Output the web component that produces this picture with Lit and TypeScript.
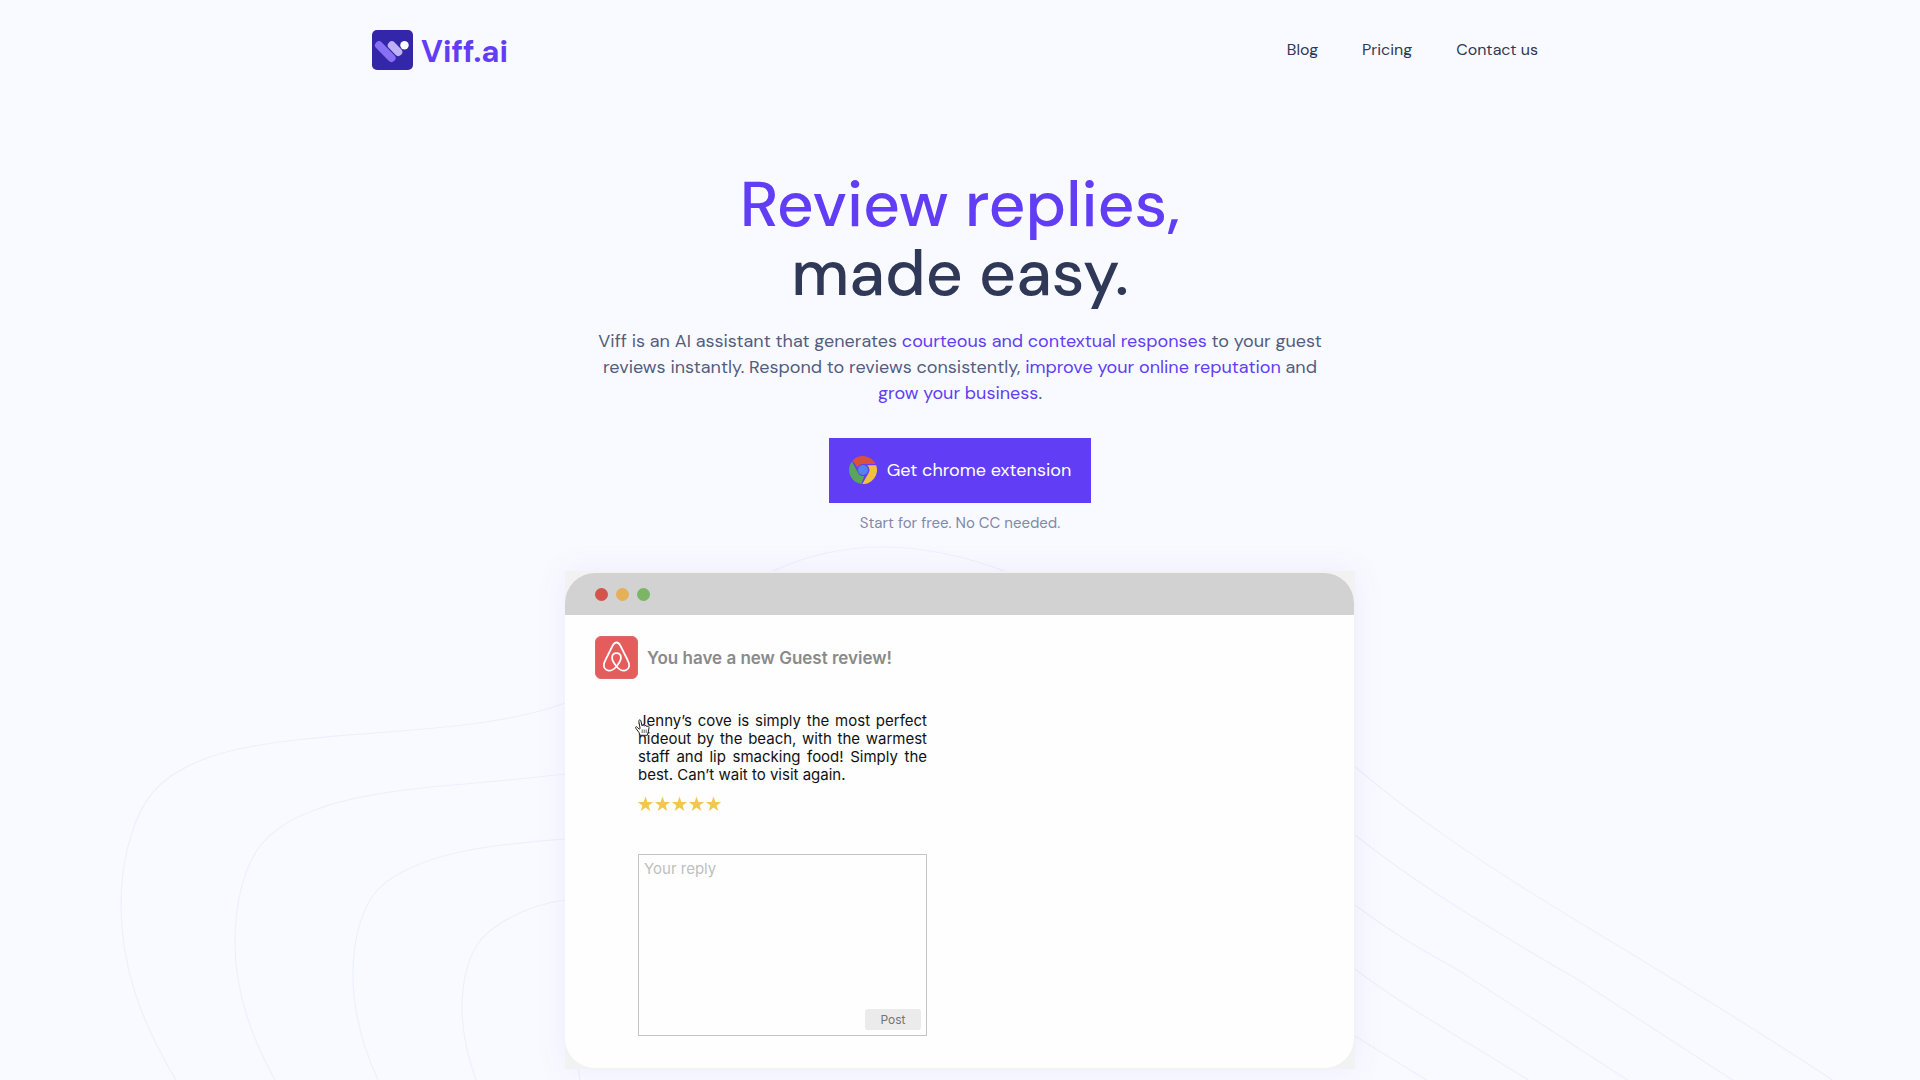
import { LitElement, html, svg, css } from "lit";
import { customElement } from "lit/decorators.js";

const CONTOURS = [
  "M176 1080C140 1020 121 965 121 905C121 850 138 808 155 790C170 773 198 759 230 751C330 727 470 738 565 703C640 675 700 601 773 571C808 555 845 547 883 547C925 547 968 557 1010 573C1120 622 1250 681 1355 767C1410 813 1470 856 1577 921C1650 965 1740 1019 1834 1081",
  "M275 1080C250 1035 235 990 235 943C235 900 245 866 260 846C270 833 290 819 310 812C370 786 470 786 565 774L1355 835C1410 879 1480 923 1577 979L1734 1081",
  "M378 1080C362 1045 353 1012 353 975C353 940 361 913 372 897C385 877 422 859 465 851C498 844 530 842 565 839L1355 905C1400 939 1430 954 1458 970L1629 1081",
  "M476 1080C467 1055 462 1033 462 1007C462 982 468 959 477 945C486 930 520 906 565 900L1355 969C1400 1004 1460 1037 1530 1081",
  "M580 1080L578 1066L1355 1036L1428 1081",
];

@customElement("site-header")
export class SiteHeader extends LitElement {
  static styles = css`
    :host { display: block; }
    .bar {
      box-sizing: border-box;
      max-width: 1176px;
      min-height: 100px;
      margin: 0 auto;
      padding-right: 10px;
      display: flex;
      align-items: center;
      justify-content: space-between;
    }
    .brand {
      display: flex;
      align-items: center;
      gap: 8px;
      color: #613df5;
      font-size: 31px;
      line-height: 40px;
      font-weight: 700;
      text-decoration: none;
    }
    .wordmark { padding-top: 4px; }
    .mark { display: block; width: 41px; height: 40px; }
    .links { display: flex; gap: 44px; }
    .link {
      color: #2f3857;
      font-size: 16px;
      line-height: 24px;
      font-weight: 400;
      text-decoration: none;
    }
  `;

  render() {
    return html`
      <header class="bar">
        <a class="brand" href="#">
          <svg class="mark" viewBox="0 0 41 40" aria-hidden="true">
            <rect width="41" height="40" rx="5" fill="#3426a8" />
            <g stroke-linecap="round" stroke-width="8" fill="none">
              <path d="M7 15.300L19.500 28" stroke="#8770f4" />
              <path d="M19.800 15.300L26.300 22" stroke="#bfb1f8" />
            </g>
            <circle cx="32.500" cy="15.300" r="4.200" fill="#fff" />
          </svg>
          <span class="wordmark">Viff.ai</span>
        </a>
        <nav class="links">
          <a class="link" href="#blog">Blog</a>
          <a class="link" href="#pricing">Pricing</a>
          <a class="link" href="#contact">Contact us</a>
        </nav>
      </header>
    `;
  }
}

@customElement("review-demo")
export class ReviewDemo extends LitElement {
  static styles = css`
    :host { display: block; font-family: Inter, "Liberation Sans", sans-serif; }
    .frame {
      padding: 2px 1px 1px 0;
      background: #f2f2f2;
      box-shadow: 0 0 30px rgba(97, 61, 245, 0.08);
    }
    .window { border-radius: 30px; overflow: hidden; background: #fefefe; }
    .titlebar {
      display: flex;
      align-items: center;
      gap: 8px;
      height: 42px;
      padding-left: 30px;
      background: #d2d2d2;
    }
    .dot { width: 13px; height: 13px; border-radius: 50%; }
    .close { background: #d3544b; }
    .minimise { background: #e5b158; }
    .expand { background: #7bb665; }
    .body { padding: 21px 30px 32px; }
    .notice { display: flex; align-items: center; gap: 9px; }
    .app-icon { display: block; width: 43px; height: 43px; }
    .notice-title {
      margin: 0;
      color: #8a8a8a;
      font-size: 17px;
      line-height: 24px;
      font-weight: 600;
    }
    .thread { width: 289px; max-width: 100%; margin: 33px 0 0 43px; }
    .review { position: relative; }
    .quote {
      margin: 0;
      color: #111;
      font-size: 15px;
      line-height: 18px;
      text-align: justify;
    }
    .cursor { position: absolute; left: -3px; top: 7px; width: 15px; height: 17px; }
    .stars { display: block; width: 84px; height: 16px; margin-top: 12px; }
    .reply {
      display: flex;
      flex-direction: column;
      margin-top: 42px;
      border: 1px solid #c4c4c4;
    }
    .field {
      box-sizing: border-box;
      width: 100%;
      height: 152px;
      padding: 5px;
      border: 0;
      outline: 0;
      resize: none;
      background: transparent;
      font: 400 15px/18px Inter, "Liberation Sans", sans-serif;
      color: #111;
    }
    .field::placeholder { color: #bebebe; opacity: 1; }
    .post {
      align-self: flex-end;
      width: 56px;
      height: 21px;
      margin: 2px 5px 5px 0;
      padding: 0;
      border: 0;
      border-radius: 3px;
      background: #ebebeb;
      color: #747474;
      font: 400 12px/21px Inter, "Liberation Sans", sans-serif;
    }
  `;

  private star(index: number) {
    const x = index * 17;
    return svg`<path transform="translate(${x} 0)" fill="#f2c651"
      d="M7.500 0.500L9.400 6H15.200L10.600 9.400L12.300 15L7.500 11.600L2.700 15L4.400 9.400L-0.200 6H5.600Z" />`;
  }

  render() {
    return html`
      <div class="frame">
        <div class="window">
          <div class="titlebar">
            <span class="dot close"></span>
            <span class="dot minimise"></span>
            <span class="dot expand"></span>
          </div>
          <div class="body">
            <div class="notice">
              <svg class="app-icon" viewBox="0 0 43 43" aria-hidden="true">
                <rect x="0.500" y="0.500" width="42" height="42" rx="5.500" fill="#e65c5c" stroke="#d9696b" />
                <path
                  d="M21.500 30.500C18.800 27.200 17.100 24.500 17.100 21.800C17.100 19 18.800 17.200 21.500 17.200S25.900 19 25.900 21.800C25.900 24.500 24.200 27.200 21.500 30.500ZM21.500 30.500C18.700 33.600 16 35 13.400 34.600C10.300 34.100 8.500 31.200 8.900 28.200C9.100 26.700 10.300 24.400 11.200 22.500L17.500 9.800C18.600 7.600 19.600 6.500 21.500 6.500S24.400 7.600 25.500 9.800L31.800 22.500C32.700 24.400 33.900 26.700 34.100 28.200C34.500 31.200 32.700 34.100 29.600 34.600C27 35 24.300 33.600 21.500 30.500Z"
                  fill="none" stroke="#fff" stroke-width="1.800" stroke-linejoin="round" />
              </svg>
              <h2 class="notice-title">You have a new Guest review!</h2>
            </div>
            <div class="thread">
              <div class="review">
                <p class="quote">
                  Jenny’s cove is simply the most perfect hideout by the beach, with the warmest staff
                  and lip smacking food! Simply the best. Can’t wait to visit again.
                </p>
                <svg class="cursor" viewBox="0 0 15 17" aria-hidden="true">
                  <path
                    d="M4.200 10.200L2.400 8.300C1.200 7 0 8 .9 9.300L4 13.500L5 16.300H12.200L13.300 13L14 8.500C14.200 7 12.400 6.600 12 7.800C12 6.400 10 5.900 9.500 7.200C9.300 6 7.600 5.700 7 6.800L5.900 1.800C5.500 .3 3.500 .7 3.800 2.300L5.100 9.500Z"
                    fill="#fff" stroke="#222" stroke-width="1" stroke-linejoin="round" />
                  <path d="M7.200 10.500V14M9.200 10.500V14M11.200 10.500V14" stroke="#444" stroke-width=".8" />
                </svg>
              </div>
              <svg class="stars" viewBox="0 0 84 16" role="img" aria-label="5 out of 5">
                ${[0, 1, 2, 3, 4].map((i) => this.star(i))}
              </svg>
              <div class="reply">
                <textarea class="field" aria-label="Your reply" placeholder="Your reply"></textarea>
                <button class="post" type="button">Post</button>
              </div>
            </div>
          </div>
        </div>
      </div>
    `;
  }
}

@customElement("app-root")
export class AppRoot extends LitElement {
  static styles = css`
    :host {
      display: block;
      position: relative;
      box-sizing: border-box;
      min-height: 100vh;
      overflow: hidden;
      padding-bottom: 10px;
      background: #f9faff;
      font-family: "DM Sans", Inter, "Liberation Sans", sans-serif;
    }
    .contours {
      position: absolute;
      inset: 0;
      width: 100%;
      height: 100%;
      fill: none;
      stroke: #ebf0ff;
      stroke-width: 1.2px;
    }
    .page { position: relative; }
    .hero {
      display: flex;
      flex-direction: column;
      align-items: center;
      padding: 70px 16px 0;
      text-align: center;
    }
    .title {
      margin: 0;
      color: #2f3857;
      font-size: 64px;
      line-height: 69px;
      font-weight: 500;
    }
    .accent { color: #613df5; }
    .line { display: block; }
    .lead {
      max-width: 740px;
      margin: 20px 0 0;
      color: #535d7e;
      font-size: 18px;
      line-height: 26px;
    }
    .cta {
      display: flex;
      align-items: center;
      gap: 10px;
      margin-top: 32px;
      padding: 18px 20px 19px;
      background: #613df5;
      color: #fff;
      font-size: 18px;
      line-height: 26px;
      font-weight: 400;
      text-decoration: none;
    }
    .chrome { display: block; width: 28px; height: 28px; }
    .note {
      margin: 8px 0 36px;
      color: #7f88a8;
      font-size: 15px;
      line-height: 24px;
      font-weight: 400;
    }
    .demo { width: 790px; max-width: 100%; text-align: left; }
  `;

  render() {
    return html`
      <svg class="contours" viewBox="0 0 1920 1080" preserveAspectRatio="xMidYMin slice" aria-hidden="true">
        ${CONTOURS.map((d) => svg`<path d=${d} />`)}
      </svg>
      <div class="page">
        <site-header></site-header>
        <main class="hero">
          <h1 class="title">
            <span class="line accent">Review replies,</span>
            <span class="line">made easy.</span>
          </h1>
          <p class="lead">
            Viff is an AI assistant that generates
            <span class="accent">courteous and contextual responses</span> to your guest reviews
            instantly. Respond to reviews consistently,
            <span class="accent">improve your online reputation</span> and
            <span class="accent">grow your business</span>.
          </p>
          <a class="cta" href="#extension">
            <svg class="chrome" viewBox="0 0 28 28" aria-hidden="true">
              <path d="M3.500 4.700A14 14 0 0 1 26.600 8H14A6 6 0 0 0 8.600 11.700Z" fill="#d85140" />
              <path d="M2.900 5.600L8.900 16.500A6 6 0 0 0 15.300 20L12.300 27.900A14 14 0 0 1 2.900 5.600Z" fill="#58a55c" />
              <path d="M18.200 9.300H27.200A14 14 0 0 1 13.300 28L19.300 17.500A6 6 0 0 0 18.200 9.300Z" fill="#f1bf42" />
              <circle cx="14" cy="14" r="5" fill="#5383ec" />
            </svg>
            <span>Get chrome extension</span>
          </a>
          <p class="note">Start for free. No CC needed.</p>
          <review-demo class="demo"></review-demo>
        </main>
      </div>
    `;
  }
}
